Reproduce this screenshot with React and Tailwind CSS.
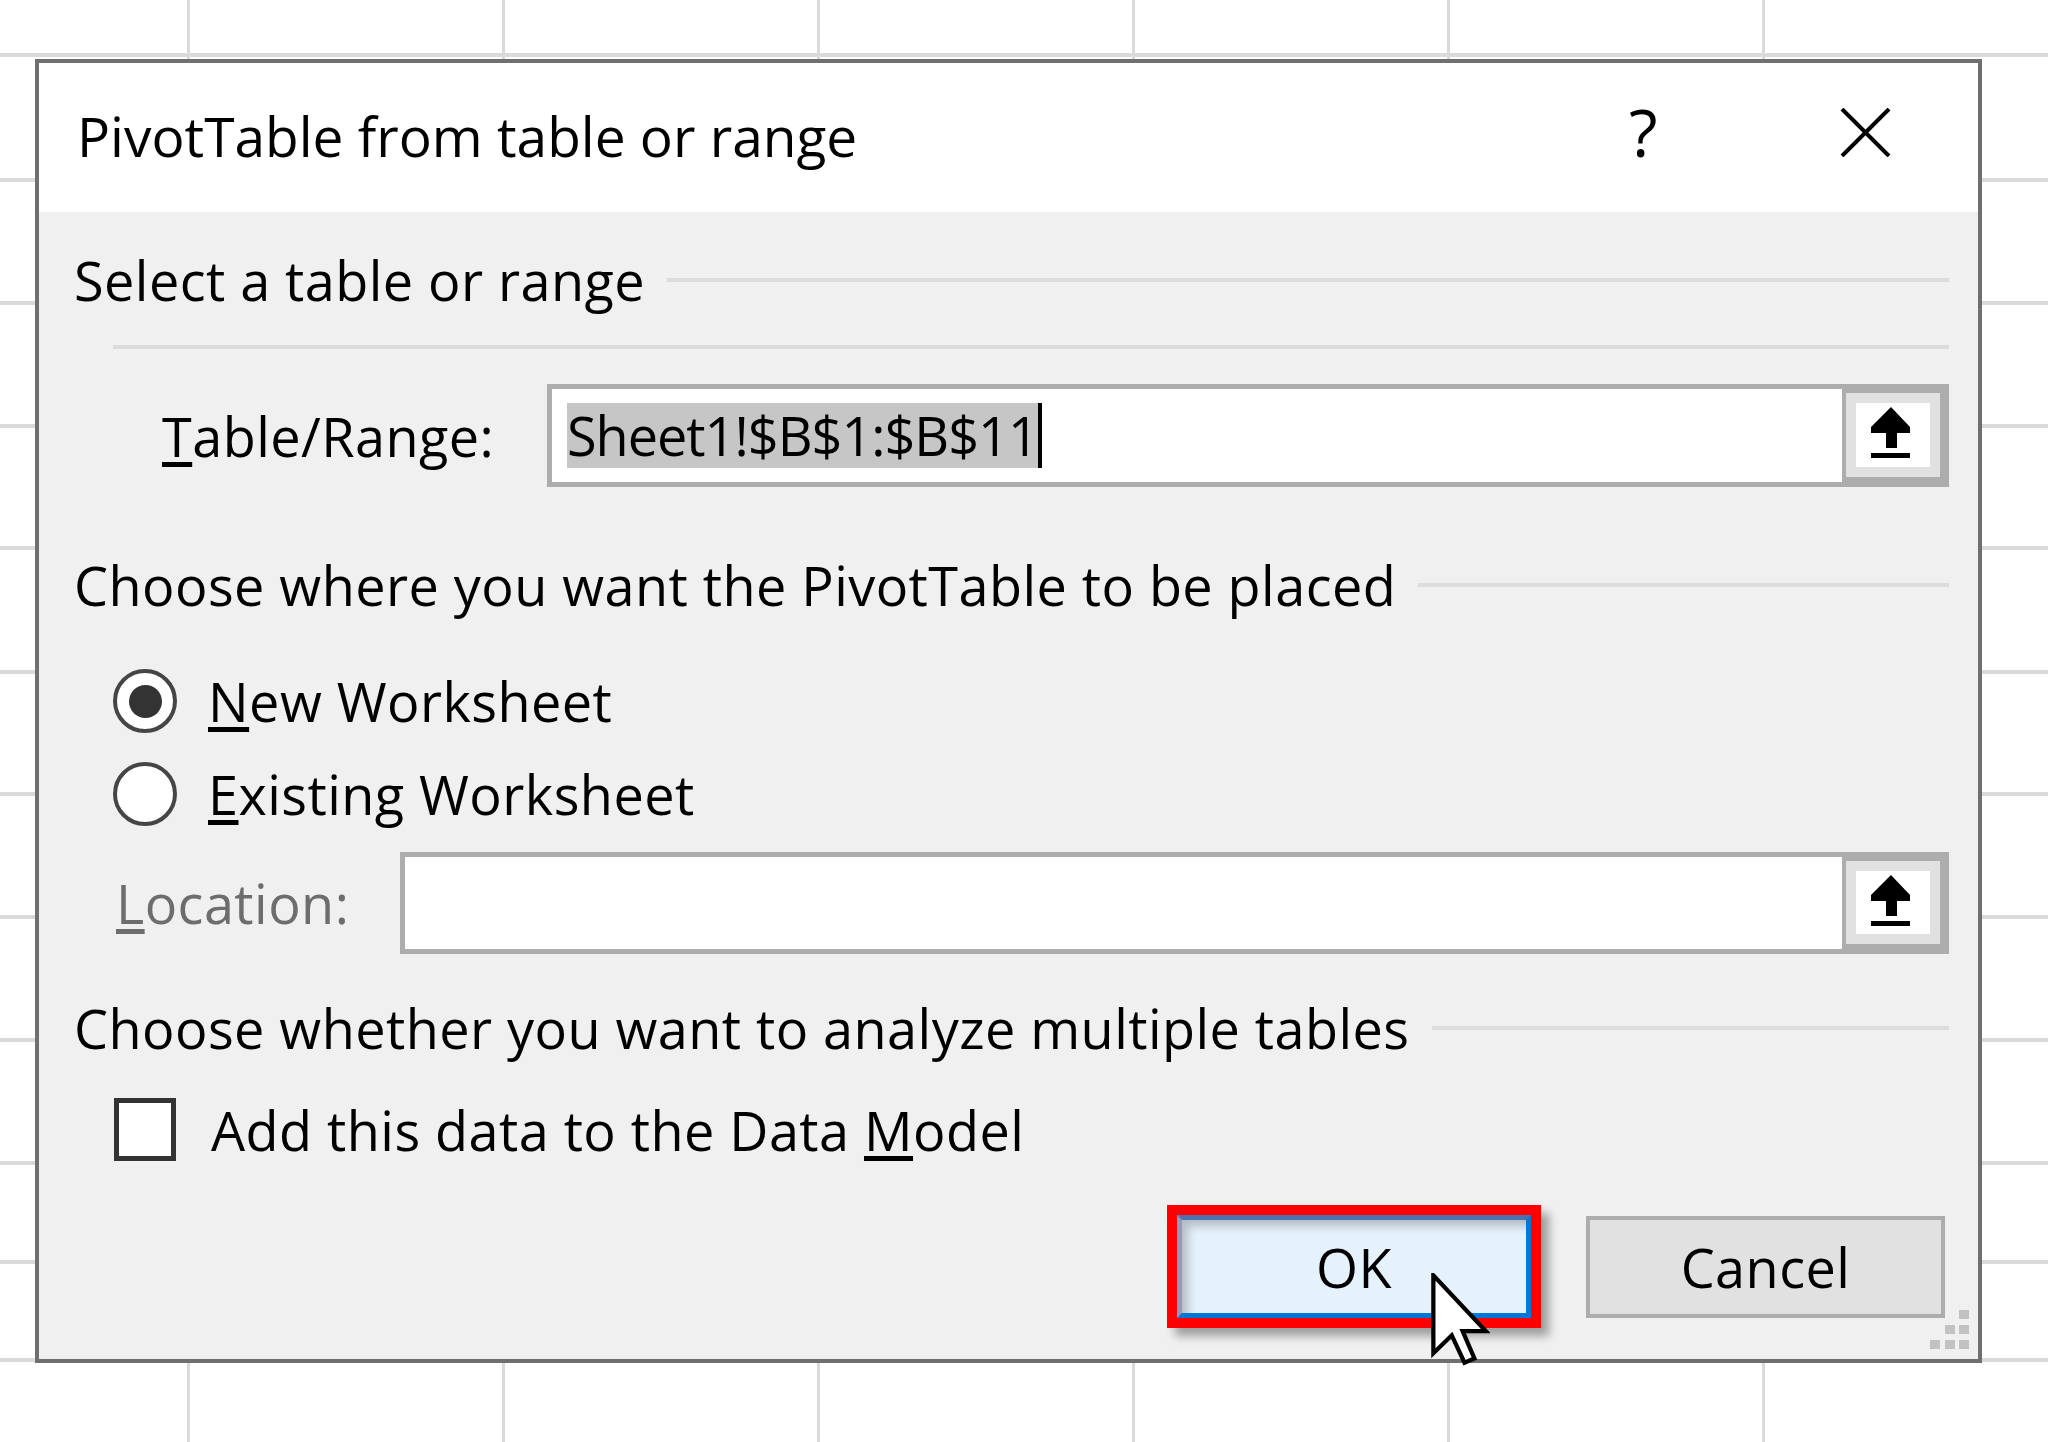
import React from "react";

const GRID_CELLS = Array.from({ length: 13 * 7 }, (_, i) => i);

function SheetGrid() {
  return (
    <div className="grid grid-cols-[190px_repeat(6,315px)] grid-rows-[57px_125px_123px_123px_122px_124px_122px_123px_123px_123px_99px_98px_200px]">
      {GRID_CELLS.map((i) => (
        <div key={i} className="border-r-[3px] border-b-[4px] border-[#dadada]" />
      ))}
    </div>
  );
}

function CollapseButton() {
  return (
    <div className="w-[102px] h-full bg-[#adadad] pt-[4px] pl-[4px] pr-[4px] pb-[5px] flex">
      <div className="flex-1 bg-[#e1e1e1] p-[10px] flex">
        <div className="flex-1 bg-white flex items-center justify-center">
          <svg width="74" height="64" viewBox="0 0 74 64">
            <polygon points="35,4 54,24 54,30 41,30 41,45 30,45 30,30 15,30 15,24" fill="#000" />
            <rect x="15" y="50" width="39" height="5" fill="#000" />
          </svg>
        </div>
      </div>
    </div>
  );
}

function RangeInput({ children }) {
  return (
    <div className="flex-1 h-full flex border-[5px] border-[#adadad] bg-white">
      <div className="flex-1 flex items-center pl-[15px]">{children}</div>
      <CollapseButton />
    </div>
  );
}

function SectionHeading({ children }) {
  return (
    <div className="flex items-center h-[54px]">
      <span className="leading-none whitespace-nowrap">{children}</span>
      <div className="flex-1 h-[4px] bg-[#dcdcdc] ml-[22px]" />
    </div>
  );
}

function Key({ children }) {
  return <span className="underline decoration-[5px] underline-offset-[5px]">{children}</span>;
}

function Radio({ checked }) {
  return (
    <div className="w-[64px] h-[64px] rounded-full border-[4px] border-[#454545] bg-white flex items-center justify-center shrink-0">
      {checked && <div className="w-[33px] h-[33px] rounded-full bg-[#333333]" />}
    </div>
  );
}

function PivotDialog() {
  return (
    <div className="absolute left-[35px] top-[59px] w-[1947px] h-[1304px] border-[4px] border-[#6f6f6f] bg-[#f0f0f0] flex flex-col">
      {/* title bar */}
      <div className="h-[149px] bg-white flex items-start pl-[38px] pr-[87px] shrink-0">
        <span className="mt-[45px] text-[55px] leading-none whitespace-nowrap text-black">
          PivotTable from table or range
        </span>
        <span className="ml-auto mt-[35px] w-[40px] text-[66px] leading-none text-black">?</span>
        <svg className="ml-[171px] mt-[45px]" width="51" height="49" viewBox="0 0 51 49">
          <line x1="2" y1="1" x2="49" y2="48" stroke="#000" strokeWidth="4" />
          <line x1="49" y1="1" x2="2" y2="48" stroke="#000" strokeWidth="4" />
        </svg>
      </div>

      {/* body */}
      <div className="relative flex-1 flex flex-col pl-[35px] pr-[29px] text-[54px] leading-none tracking-[0.45px] text-black">
        <div className="mt-[41px]">
          <SectionHeading>Select a table or range</SectionHeading>
        </div>
        <div className="mt-[38px] ml-[39px] h-[4px] bg-[#dcdcdc]" />

        <div className="mt-[35px] h-[103px] flex items-center pl-[88px]">
          <span className="w-[385px] shrink-0 whitespace-nowrap">
            <Key>T</Key>able/Range:
          </span>
          <RangeInput>
            <span className="inline-block h-[65px] leading-[65px] bg-[#c6c6c6] tracking-[-1px] whitespace-nowrap">
              Sheet1!$B$1:$B$11
            </span>
            <span className="w-[4px] h-[65px] bg-black" />
          </RangeInput>
        </div>

        <div className="mt-[71px]">
          <SectionHeading>Choose where you want the PivotTable to be placed</SectionHeading>
        </div>

        <div className="mt-[57px] h-[64px] flex items-center ml-[39px]">
          <Radio checked />
          <span className="ml-[31px] whitespace-nowrap">
            <Key>N</Key>ew Worksheet
          </span>
        </div>
        <div className="mt-[29px] h-[64px] flex items-center ml-[39px]">
          <Radio />
          <span className="ml-[31px] whitespace-nowrap">
            <Key>E</Key>xisting Worksheet
          </span>
        </div>

        <div className="mt-[26px] h-[102px] flex items-center pl-[42px]">
          <span className="w-[284px] shrink-0 whitespace-nowrap text-[#6d6d6d]">
            <Key>L</Key>ocation:
          </span>
          <RangeInput />
        </div>

        <div className="mt-[47px]">
          <SectionHeading>Choose whether you want to analyze multiple tables</SectionHeading>
        </div>

        <div className="mt-[43px] h-[63px] flex items-center ml-[40px]">
          <div className="w-[62px] h-[63px] border-[5px] border-[#333333] bg-white shrink-0" />
          <span className="ml-[35px] whitespace-nowrap">
            Add this data to the Data <Key>M</Key>odel
          </span>
        </div>

        <div className="mt-[44px] flex items-center justify-end pr-[4px]">
          <div className="border-[10px] border-[#ff0000] shadow-[8px_8px_9px_rgba(0,0,0,0.35)]">
            <div className="w-[354px] h-[103px] bg-[#e5f1fb] border-[5px] border-[#0078d7] border-t-[#4a72b2] border-l-[#8d9db4] shadow-[inset_9px_9px_10px_-3px_rgba(0,0,0,0.22)] flex items-center justify-center">
              OK
            </div>
          </div>
          <div className="ml-[45px] w-[359px] h-[102px] bg-[#e1e1e1] border-[4px] border-[#adadad] flex items-center justify-center">
            Cancel
          </div>
        </div>

        {/* size grip */}
        <div className="absolute right-[9px] bottom-[10px] grid grid-cols-[10px_10px_10px] gap-x-[4.5px] gap-y-[6px]">
          <div className="w-[10px] h-[9px]" />
          <div className="w-[10px] h-[9px]" />
          <div className="w-[10px] h-[9px] bg-[#c2c2c2]" />
          <div className="w-[10px] h-[9px]" />
          <div className="w-[10px] h-[9px] bg-[#c2c2c2]" />
          <div className="w-[10px] h-[9px] bg-[#c2c2c2]" />
          <div className="w-[10px] h-[9px] bg-[#c2c2c2]" />
          <div className="w-[10px] h-[9px] bg-[#c2c2c2]" />
          <div className="w-[10px] h-[9px] bg-[#c2c2c2]" />
        </div>
      </div>
    </div>
  );
}

function Pointer() {
  return (
    <svg
      className="absolute left-[1431px] top-[1273px]"
      width="59"
      height="93"
      viewBox="0 0 12.5 19.7"
    >
      <polygon
        points="0.5,0.5 0.5,17 4.4,13.2 7.1,19 9.2,18.1 6.7,12.3 11.6,12.3"
        fill="#fff"
        stroke="#000"
        strokeWidth="0.9"
        strokeLinejoin="miter"
      />
    </svg>
  );
}

export default function App() {
  return (
    <div className="relative w-[2048px] h-[1442px] overflow-hidden bg-white font-['Open_Sans','Noto_Sans',sans-serif]">
      <SheetGrid />
      <PivotDialog />
      <Pointer />
    </div>
  );
}
